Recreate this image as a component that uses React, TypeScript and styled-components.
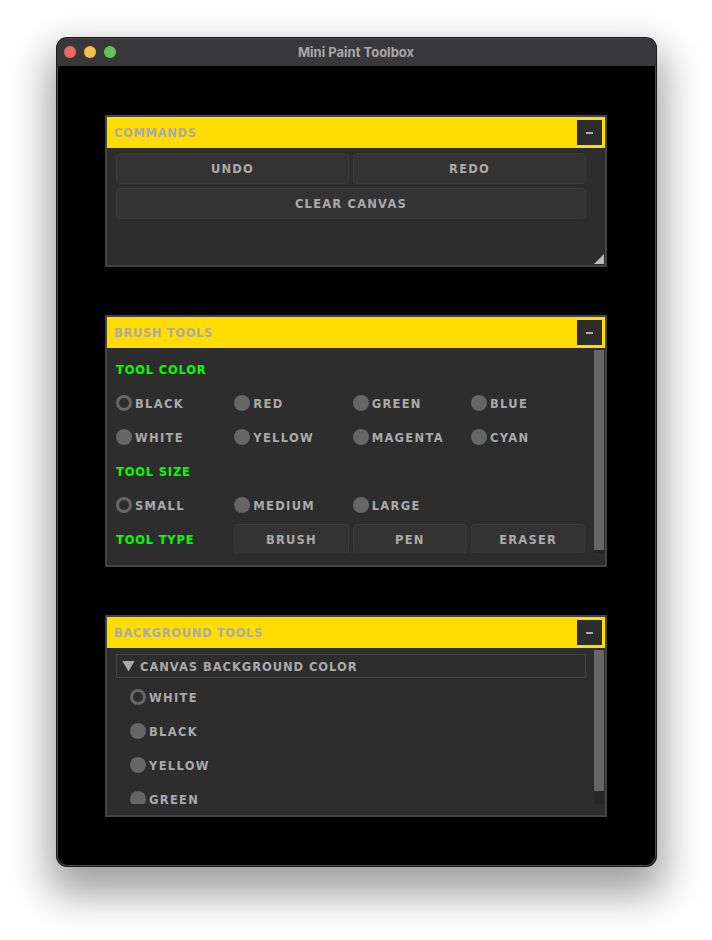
import styled, { createGlobalStyle } from 'styled-components';

const GlobalStyle = createGlobalStyle`
  html, body {
    margin: 0;
    padding: 0;
    background: #fff;
  }
  * {
    box-sizing: border-box;
  }
`;

const pixelFont = `"DejaVu Sans", "Liberation Sans", sans-serif`;

const Page = styled.div`
  width: 712px;
  height: 940px;
  padding: 38px 0 0 57px;
  overflow: hidden;
`;

const MacWindow = styled.div`
  width: 599px;
  height: 828px;
  display: flex;
  flex-direction: column;
  border-radius: 10px;
  overflow: hidden;
  background: #000;
  box-shadow:
    0 0 0 1px #1a1a1a,
    inset 0 0 0 1px #4a4a4a,
    0 20px 40px 8px rgba(0, 0, 0, 0.38);
`;

const TitleBar = styled.header`
  position: relative;
  height: 28px;
  flex: none;
  display: flex;
  align-items: center;
  justify-content: center;
  background: #38383a;
  border-top: 1px solid #4c4c4e;
`;

const Lights = styled.div`
  position: absolute;
  left: 7px;
  top: 7px;
  display: flex;
  gap: 8px;
`;

const Light = styled.span<{ $color: string }>`
  width: 12px;
  height: 12px;
  border-radius: 50%;
  background: ${(p) => p.$color};
`;

const WindowTitle = styled.h1`
  margin: 0 1px 2px 0;
  color: #a8a8a8;
  font: 700 13px Inter, "Liberation Sans", sans-serif;
`;

const Content = styled.main`
  flex: 1;
  display: flex;
  flex-direction: column;
  gap: 48px;
  padding: 49px 0 0 48px;
`;

const Panel = styled.section<{ $height: number }>`
  position: relative;
  width: 502px;
  height: ${(p) => p.$height}px;
  flex: none;
  display: flex;
  flex-direction: column;
  background: #2d2d2d;
  border: 2px solid #444;
`;

const PanelHeader = styled.div`
  height: 31px;
  flex: none;
  display: flex;
  align-items: center;
  justify-content: space-between;
  padding: 0 3px 0 7px;
  background: #ffdd00;
`;

const PanelTitle = styled.h2`
  margin: 0;
  color: #aaa;
  font: 700 11.5px ${pixelFont};
  letter-spacing: 0.65px;
`;

const CollapseButton = styled.button`
  width: 25px;
  height: 25px;
  display: flex;
  align-items: center;
  justify-content: center;
  padding: 0;
  border: 0;
  background: #2d2d2d;
  &::before {
    content: '';
    width: 7px;
    height: 2px;
    background: #aaa;
  }
`;

const PanelBody = styled.div`
  display: flex;
  flex-direction: column;
  gap: 4px;
  padding: 5px 19px 0 9px;
`;

const ButtonRow = styled.div<{ $columns: number }>`
  display: grid;
  grid-template-columns: repeat(${(p) => p.$columns}, 1fr);
  gap: 4px;
`;

const ToolButton = styled.button<{ $short?: boolean }>`
  height: ${(p) => (p.$short ? 30 : 31)}px;
  padding: ${(p) => (p.$short ? '2px 0 0' : '0')};
  border: 1px solid #3b3b3b;
  border-radius: 4px;
  background: #333;
  color: #aaa;
  font: 700 11.5px ${pixelFont};
  letter-spacing: 1.2px;
`;

const ResizeGrip = styled.span`
  position: absolute;
  right: 1px;
  bottom: 1px;
  width: 10px;
  height: 10px;
  background: #bdbdbd;
  clip-path: polygon(100% 0, 100% 100%, 0 100%);
`;

const ScrollArea = styled.div<{ $height: number; $marginTop: number }>`
  position: relative;
  height: ${(p) => p.$height}px;
  margin-top: ${(p) => p.$marginTop}px;
  overflow: hidden;
`;

const Scrollbar = styled.div<{ $thumb: number }>`
  position: absolute;
  top: 0;
  right: 1px;
  bottom: 0;
  width: 10px;
  background: #262626;
  &::before {
    content: '';
    display: block;
    width: 100%;
    height: ${(p) => p.$thumb}px;
    background: #666;
  }
`;

const ToolGrid = styled.div`
  display: grid;
  grid-template-columns: repeat(4, 114.33px);
  grid-auto-rows: 34px;
  column-gap: 4px;
  margin-left: 9px;
  margin-top: 2px;
  align-items: center;
`;

const SectionLabel = styled.div<{ $wide?: boolean }>`
  grid-column: ${(p) => (p.$wide ? '1 / -1' : 'auto')};
  padding-top: 2px;
  color: #00ff00;
  font: 700 11.5px ${pixelFont};
  letter-spacing: 0.8px;
`;

const RadioItem = styled.label`
  display: flex;
  align-items: center;
  gap: 3px;
  color: #aaa;
  font: 700 11.5px ${pixelFont};
  letter-spacing: 1.3px;
`;

const RadioText = styled.span`
  padding-top: 2px;
`;

const RadioDot = styled.span<{ $selected?: boolean }>`
  width: 16px;
  height: 16px;
  flex: none;
  border-radius: 50%;
  background: ${(p) => (p.$selected ? '#2d2d2d' : '#666')};
  border: ${(p) => (p.$selected ? '3px solid #666' : '0')};
`;

const TreeHeader = styled.div`
  height: 24px;
  display: flex;
  align-items: center;
  gap: 5px;
  margin: 4px 19px 0 9px;
  padding-left: 5px;
  border: 1px solid #444;
  color: #aaa;
  font: 700 11.5px ${pixelFont};
  letter-spacing: 0.95px;
`;

const TreeArrow = styled.span`
  width: 13px;
  height: 11px;
  background: #aaa;
  clip-path: polygon(0 0, 100% 0, 50% 100%);
`;

const TreeText = styled.span`
  padding-top: 1px;
`;

const TreeList = styled.div`
  display: grid;
  grid-auto-rows: 34px;
  align-items: center;
  margin: 2px 0 0 23px;
`;

const commandRows = [['UNDO', 'REDO'], ['CLEAR CANVAS']];
const colors = ['BLACK', 'RED', 'GREEN', 'BLUE', 'WHITE', 'YELLOW', 'MAGENTA', 'CYAN'];
const sizes = ['SMALL', 'MEDIUM', 'LARGE'];
const types = ['BRUSH', 'PEN', 'ERASER'];
const backgrounds = ['WHITE', 'BLACK', 'YELLOW', 'GREEN'];

function Radio({ label, selected }: { label: string; selected?: boolean }) {
  return (
    <RadioItem>
      <RadioDot $selected={selected} />
      <RadioText>{label}</RadioText>
    </RadioItem>
  );
}

function Header({ title }: { title: string }) {
  return (
    <PanelHeader>
      <PanelTitle>{title}</PanelTitle>
      <CollapseButton type="button" aria-label="Collapse" />
    </PanelHeader>
  );
}

export default function App() {
  return (
    <Page>
      <GlobalStyle />
      <MacWindow>
        <TitleBar>
          <Lights>
            <Light $color="#ed6a5f" />
            <Light $color="#f5bf4f" />
            <Light $color="#61c554" />
          </Lights>
          <WindowTitle>Mini Paint Toolbox</WindowTitle>
        </TitleBar>
        <Content>
          <Panel $height={152}>
            <Header title="COMMANDS" />
            <PanelBody>
              {commandRows.map((row) => (
                <ButtonRow key={row[0]} $columns={row.length}>
                  {row.map((name) => (
                    <ToolButton key={name} type="button">
                      {name}
                    </ToolButton>
                  ))}
                </ButtonRow>
              ))}
            </PanelBody>
            <ResizeGrip />
          </Panel>

          <Panel $height={252}>
            <Header title="BRUSH TOOLS" />
            <ScrollArea $height={203} $marginTop={2}>
              <ToolGrid>
                <SectionLabel $wide>TOOL COLOR</SectionLabel>
                {colors.map((name, i) => (
                  <Radio key={name} label={name} selected={i === 0} />
                ))}
                <SectionLabel $wide>TOOL SIZE</SectionLabel>
                {sizes.map((name, i) => (
                  <Radio key={name} label={name} selected={i === 0} />
                ))}
                <span />
                <SectionLabel>TOOL TYPE</SectionLabel>
                {types.map((name) => (
                  <ToolButton key={name} type="button" $short>
                    {name}
                  </ToolButton>
                ))}
              </ToolGrid>
              <Scrollbar $thumb={200} />
            </ScrollArea>
          </Panel>

          <Panel $height={202}>
            <Header title="BACKGROUND TOOLS" />
            <ScrollArea $height={154} $marginTop={2}>
              <TreeHeader>
                <TreeArrow />
                <TreeText>CANVAS BACKGROUND COLOR</TreeText>
              </TreeHeader>
              <TreeList>
                {backgrounds.map((name, i) => (
                  <Radio key={name} label={name} selected={i === 0} />
                ))}
              </TreeList>
              <Scrollbar $thumb={141} />
            </ScrollArea>
          </Panel>
        </Content>
      </MacWindow>
    </Page>
  );
}
